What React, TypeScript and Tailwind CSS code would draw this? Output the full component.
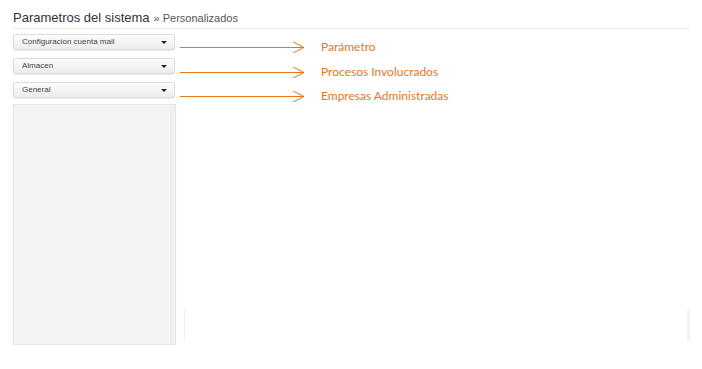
import React from "react";

function Dropdown({ label }: { label: string }) {
  return (
    <div className="h-[16px] w-[162px] flex items-center justify-between pl-[8px] pr-[7px] rounded-[2px] border border-[#dcdcdc] bg-gradient-to-b from-[#fdfdfd] to-[#ececec] shadow-[0_1px_1px_rgba(0,0,0,0.08)]">
      <span className="text-[8px] text-[#444] leading-none" style={{ fontFamily: "Arial, 'Liberation Sans', sans-serif" }}>{label}</span>
      <span className="w-0 h-0 border-l-[3px] border-r-[3px] border-t-[3px] border-l-transparent border-r-transparent border-t-[#222]" />
    </div>
  );
}

function Arrow({ text }: { text: string }) {
  return (
    <div className="h-[16px] flex items-center">
      <svg width="126" height="12" viewBox="0 0 126 12" className="ml-[4px] shrink-0">
        <line x1="0" y1="6.5" x2="124" y2="6.5" stroke="#e6761c" strokeWidth="1" />
        <polyline points="113,1 124,6.5 113,12" fill="none" stroke="#e6761c" strokeWidth="1" />
      </svg>
      <span className="ml-[15px] text-[12px] text-[#e6761c] leading-none" style={{ fontFamily: "Lato, 'Noto Sans', sans-serif" }}>{text}</span>
    </div>
  );
}

export default function App() {
  return (
    <div className="w-[702px] h-[369px] bg-white relative" style={{ fontFamily: "Arial, 'Liberation Sans', sans-serif" }}>
      <div className="px-[13px] pt-[10px]">
        <div className="flex items-baseline border-b border-[#eeeeee] pb-[2px] w-[677px] leading-[15px]">
          <span className="text-[13px] text-[#333]">Parametros del sistema</span>
          <span className="text-[11px] text-[#555] ml-[4px]">» Personalizados</span>
        </div>
        <div className="flex mt-[5px]">
          <div className="flex flex-col">
            <div className="flex flex-col gap-[8px]">
              <Dropdown label="Configuracion cuenta mail" />
              <Dropdown label="Almacen" />
              <Dropdown label="General" />
            </div>
            <div className="mt-[6px] w-[163px] h-[241px] border border-[#e6e6e6] bg-[#f4f4f4] flex justify-end shadow-[0_0_1px_rgba(0,0,0,0.06)]">
              <div className="w-[5px] h-full border-l border-[#ececec] bg-[#f1f1f1]" />
            </div>
          </div>
          <div className="flex flex-col pt-[5px]">
            <div className="flex flex-col gap-[8.5px]">
              <Arrow text="Parámetro" />
              <Arrow text="Procesos Involucrados" />
              <Arrow text="Empresas Administradas" />
            </div>
            <div className="mt-[206px] ml-[8px] w-[506px] h-[31px] border-l border-[#f0f0f0] flex justify-end">
              <div className="w-[3px] h-full bg-[#f3f3f3]" />
            </div>
          </div>
        </div>
      </div>
    </div>
  );
}
